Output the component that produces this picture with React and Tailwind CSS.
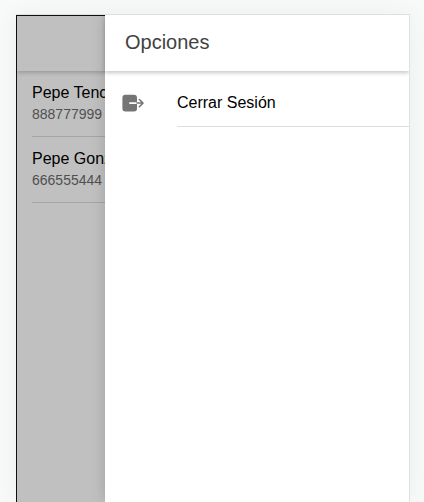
const contacts = [
  { name: "Pepe Tenc", phone: "888777999" },
  { name: "Pepe Gonz", phone: "666555444" },
];

function ExitIcon() {
  return (
    <svg className="h-6 w-6 shrink-0" viewBox="0 0 24 24" fill="none" aria-hidden="true">
      <rect x="1.4" y="3.8" width="14.6" height="16.6" rx="3" fill="#757575" />
      <path d="M8.8 12.1H16" stroke="#fff" strokeWidth="1.6" strokeLinecap="round" />
      <path d="M16 12.1H21.5M18.4 8.5L22 12.1L18.4 15.7" stroke="#757575" strokeWidth="1.5" strokeLinecap="round" strokeLinejoin="round" />
    </svg>
  );
}

function ContactList() {
  return (
    <main className="flex grow flex-col border-t border-l border-[#111111] bg-[#c0c0c0]">
      <header className="h-[55px] shrink-0 shadow-[0_2px_4px_rgba(0,0,0,0.2)]" />
      <ul className="pl-[15px]">
        {contacts.map((c) => (
          <li key={c.phone} className="border-b border-[#a5a5a5] pt-[11px] pb-3 whitespace-nowrap">
            <h2 className="text-base leading-[22px] text-black">{c.name}</h2>
            <p className="text-sm leading-5 text-[#505050]">{c.phone}</p>
          </li>
        ))}
      </ul>
    </main>
  );
}

function OptionsMenu() {
  return (
    <aside className="absolute inset-y-0 right-0 w-[304px] bg-white shadow-[0_0_14px_rgba(0,0,0,0.16)]">
      <header className="flex h-14 items-center px-5 pb-0.5 shadow-[0_2px_4px_rgba(0,0,0,0.22)]">
        <h1 className="text-xl leading-6 text-[#424242]">Opciones</h1>
      </header>
      <nav className="pt-2">
        <button type="button" className="flex w-full items-center gap-8 pl-4 text-left">
          <ExitIcon />
          <span className="flex h-12 grow items-center border-b border-[#dedede] text-base leading-6 text-black">
            Cerrar Sesión
          </span>
        </button>
      </nav>
    </aside>
  );
}

export default function App() {
  return (
    <div className="flex min-h-screen flex-col overflow-hidden bg-[#f8faf9] pt-3.5 pr-3.5 pl-4 font-['Liberation_Sans',Arial,sans-serif]">
      <div className="flex grow border-t border-r border-[#dfe1e0] shadow-[0_0_24px_rgba(0,0,0,0.05)]">
        <div className="relative flex grow overflow-hidden">
          <ContactList />
          <OptionsMenu />
        </div>
      </div>
    </div>
  );
}
